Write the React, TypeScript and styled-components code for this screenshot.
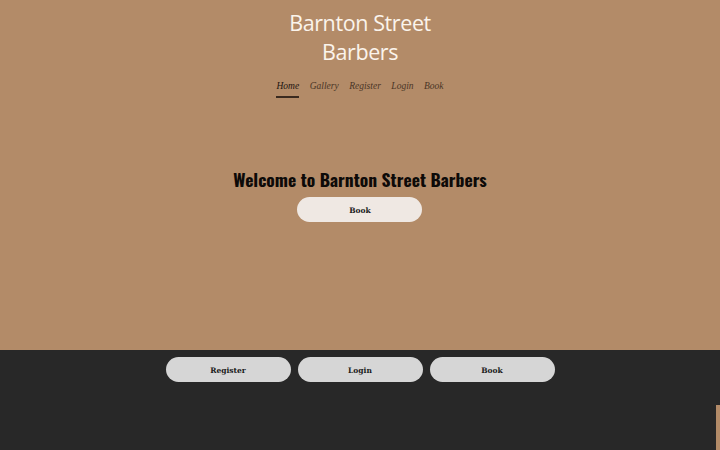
import styled, { createGlobalStyle } from "styled-components";

const GlobalStyle = createGlobalStyle`
    body {
        margin: 0;
        background: #282828;
        overflow: hidden;
    }
`

const navItems = ["Home", "Gallery", "Register", "Login", "Book"];

export default function App() {
    return (
        <>
            <GlobalStyle/>
            <Page>
                <Hero>
                    <Header>
                        <Title>Barnton Street<br/>Barbers</Title>
                        <Nav>
                            {navItems.map((item, i) => (
                                <NavLink key={item} $active={i === 0}>{item}</NavLink>
                            ))}
                        </Nav>
                    </Header>
                    <Welcome>
                        <Heading>Welcome to Barnton Street Barbers</Heading>
                        <PillButton $light>Book</PillButton>
                    </Welcome>
                </Hero>
                <Footer>
                    <PillButton>Register</PillButton>
                    <PillButton>Login</PillButton>
                    <PillButton>Book</PillButton>
                </Footer>
                <SideTab/>
            </Page>
        </>
    )
}

const Page = styled.div`
    position: relative;
    width: 720px;
    height: 450px;
    overflow: hidden;
    background: #282828;
`

const Hero = styled.section`
    display: flex;
    flex-direction: column;
    align-items: center;
    height: 350px;
    box-sizing: border-box;
    padding-top: 8px;
    background: #b38b68;
`

const Header = styled.header`
    display: flex;
    flex-direction: column;
    align-items: center;
`

const Title = styled.h1`
    margin: 0;
    font-family: "Open Sans", "Noto Sans", sans-serif;
    font-weight: 400;
    font-size: 21.5px;
    line-height: 29px;
    letter-spacing: -0.4px;
    color: #fbf4ec;
    text-align: center;
`

const Nav = styled.nav`
    display: flex;
    gap: 10.5px;
    margin-top: 14px;
`

const NavLink = styled.a<{ $active?: boolean }>`
    font-family: "Liberation Serif", "DejaVu Serif", serif;
    font-style: italic;
    font-size: 9.5px;
    line-height: 13px;
    padding-bottom: 3px;
    color: ${p => p.$active ? "#1e1510" : "#4a3526"};
    border-bottom: 2px solid ${p => p.$active ? "#3a2a1f" : "transparent"};
    cursor: pointer;
`

const Welcome = styled.div`
    display: flex;
    flex-direction: column;
    align-items: center;
    gap: 7px;
    margin-top: 70px;
`

const Heading = styled.h2`
    margin: 0;
    font-family: "Oswald", "Liberation Sans Narrow", "DejaVu Sans Condensed", sans-serif;
    font-weight: 700;
    font-size: 17.5px;
    line-height: 22px;
    color: #0d0a08;
`

const PillButton = styled.button<{ $light?: boolean }>`
    width: 125px;
    height: 25px;
    padding-top: 2px;
    border: none;
    border-radius: 13px;
    background: ${p => p.$light ? "#efe8e3" : "#d6d6d6"};
    font-family: "DejaVu Serif", "Liberation Serif", serif;
    font-weight: 700;
    font-size: 7.5px;
    color: #1a1a1a;
    cursor: pointer;
`

const Footer = styled.footer`
    display: flex;
    justify-content: center;
    gap: 7px;
    padding-top: 7px;
    height: 100px;
    box-sizing: border-box;
    background: #282828;
`

const SideTab = styled.div`
    position: absolute;
    right: 0;
    bottom: 0;
    width: 4px;
    height: 45px;
    background: #b38b68;
`
